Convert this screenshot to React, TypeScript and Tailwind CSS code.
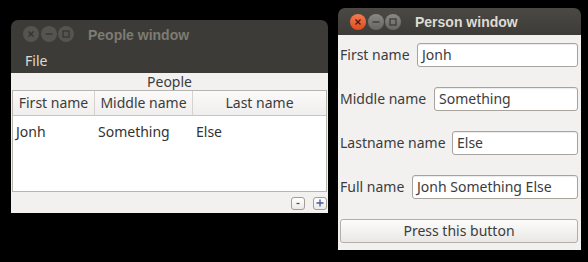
import React from "react";

const sans = { fontFamily: '"Noto Sans", "Open Sans", sans-serif' };
const bold = { fontFamily: '"Liberation Sans", Arial, sans-serif' };

const WinButtons = ({ active }: { active: boolean }) => {
  const grey = active ? "bg-gradient-to-b from-[#8a8983] to-[#66655f]" : "bg-[#55544f]";
  const close = active ? "bg-gradient-to-b from-[#f47a4f] to-[#df4a1c]" : "bg-[#55544f]";
  const glyph = active ? "#3a3935" : "#35342f";
  const closeGlyph = active ? "#4a1c0c" : "#35342f";
  return (
    <div className="flex gap-[1.5px]">
      <div className={`w-[16px] h-[16px] rounded-full ${close} flex items-center justify-center`}>
        <svg width="8" height="8" viewBox="0 0 8 8">
          <path d="M1.5 1.5 L6.5 6.5 M6.5 1.5 L1.5 6.5" stroke={closeGlyph} strokeWidth="1.4" />
        </svg>
      </div>
      <div className={`w-[16px] h-[16px] rounded-full ${grey} flex items-center justify-center`}>
        <svg width="10" height="10" viewBox="0 0 10 10">
          <path d="M1.5 5 H8.5" stroke={glyph} strokeWidth="1.3" />
        </svg>
      </div>
      <div className={`w-[16px] h-[16px] rounded-full ${grey} flex items-center justify-center`}>
        <svg width="10" height="10" viewBox="0 0 10 10">
          <rect x="2" y="2" width="6" height="6" fill="none" stroke={glyph} strokeWidth="1.2" />
        </svg>
      </div>
    </div>
  );
};

const PeopleWindow = () => (
  <div className="ml-[11px] mt-[20px] w-[317px] h-[193px] flex flex-col" style={sans}>
    <div className="h-[26px] bg-[#3c3b37] rounded-t-[7px] flex items-center pl-[12px] pt-[2px]">
      <WinButtons active={false} />
      <span className="ml-[14px] pt-[1px] text-[14px] leading-[20px] font-bold text-[#7d7b74]" style={bold}>
        People window
      </span>
    </div>
    <div className="h-[27px] bg-[#3c3b37] flex items-center pl-[14px] pt-[2px]">
      <span className="text-[14px] leading-[20px] text-[#dfdbd2]">File</span>
    </div>
    <div className="flex-1 bg-[#f2f1f0] flex flex-col px-[1px] text-[#3c3c3c]">
      <div className="h-[17px] text-center text-[14px] leading-[17px]">People</div>
      <div className="flex-1 bg-white border border-[#b8b4ae] flex flex-col">
        <div className="h-[25px] flex border-b border-[#c9c5bf] bg-gradient-to-b from-[#fbfafa] to-[#efeeec] text-[14px] leading-[20px]">
          <div className="w-[82px] flex items-center justify-center border-r border-[#d6d2cd]">First name</div>
          <div className="w-[98px] flex items-center justify-center border-r border-[#d6d2cd]">Middle name</div>
          <div className="flex-1 flex items-center justify-center">Last name</div>
        </div>
        <div className="flex pt-[6px] text-[14px] leading-[20px] text-[#333333]">
          <div className="w-[82px] pl-[3px]">Jonh</div>
          <div className="w-[98px] pl-[3px]">Something</div>
          <div className="flex-1 pl-[3px]">Else</div>
        </div>
      </div>
      <div className="h-[21px] flex items-center justify-end gap-[8px] pt-[1px]">
        <div className="w-[14px] h-[13px] rounded-[3px] border border-[#a19d97] bg-gradient-to-b from-white to-[#eceae8] flex items-center justify-center">
          <svg width="8" height="8" viewBox="0 0 8 8">
            <path d="M2.5 4.5 H5.5" stroke="#4a4a4a" strokeWidth="1.2" />
          </svg>
        </div>
        <div className="w-[14px] h-[13px] rounded-[3px] border border-[#a19d97] bg-gradient-to-b from-white to-[#eceae8] flex items-center justify-center">
          <svg width="10" height="10" viewBox="0 0 10 10">
            <path d="M1.5 5 H8.5 M5 1.5 V8.5" stroke="#3c5a9a" strokeWidth="1.3" />
          </svg>
        </div>
      </div>
    </div>
  </div>
);

const Field = ({ label, value, width }: { label: string; value: string; width: number }) => (
  <div className="h-[24px] flex items-center justify-between">
    <span className="pl-[1px] text-[14px] leading-[20px]">{label}</span>
    <div
      className="h-[24px] rounded-[3px] border border-[#a8a49d] bg-white shadow-[inset_0_1px_1px_rgba(0,0,0,0.08)] flex items-center pl-[4px] text-[14px] leading-[20px]"
      style={{ width }}
    >
      {value}
    </div>
  </div>
);

const PersonWindow = () => (
  <div className="ml-[10px] mt-[8px] w-[243px] h-[242px] flex flex-col" style={sans}>
    <div className="h-[27px] bg-gradient-to-b from-[#4a4944] to-[#3c3b37] rounded-t-[7px] flex items-center pl-[12px]">
      <WinButtons active={true} />
      <span className="ml-[14px] text-[14px] leading-[20px] font-bold text-[#dfdbd2]" style={bold}>
        Person window
      </span>
    </div>
    <div className="flex-1 bg-[#f2f1f0] flex flex-col gap-[20px] pt-[8px] pl-[1px] pr-[3px] text-[#3c3c3c]">
      <Field label="First name" value="Jonh" width={161} />
      <Field label="Middle name" value="Something" width={144} />
      <Field label="Lastname name" value="Else" width={126} />
      <Field label="Full name" value="Jonh Something Else" width={166} />
      <div className="ml-[1px] h-[24px] rounded-[3px] border border-[#b3aea8] bg-gradient-to-b from-[#fcfcfb] to-[#e9e8e6] flex items-center justify-center text-[14px] leading-[20px]">
        Press this button
      </div>
    </div>
  </div>
);

export default function App() {
  return (
    <div className="w-[588px] h-[262px] bg-black flex items-start overflow-hidden">
      <PeopleWindow />
      <PersonWindow />
    </div>
  );
}
